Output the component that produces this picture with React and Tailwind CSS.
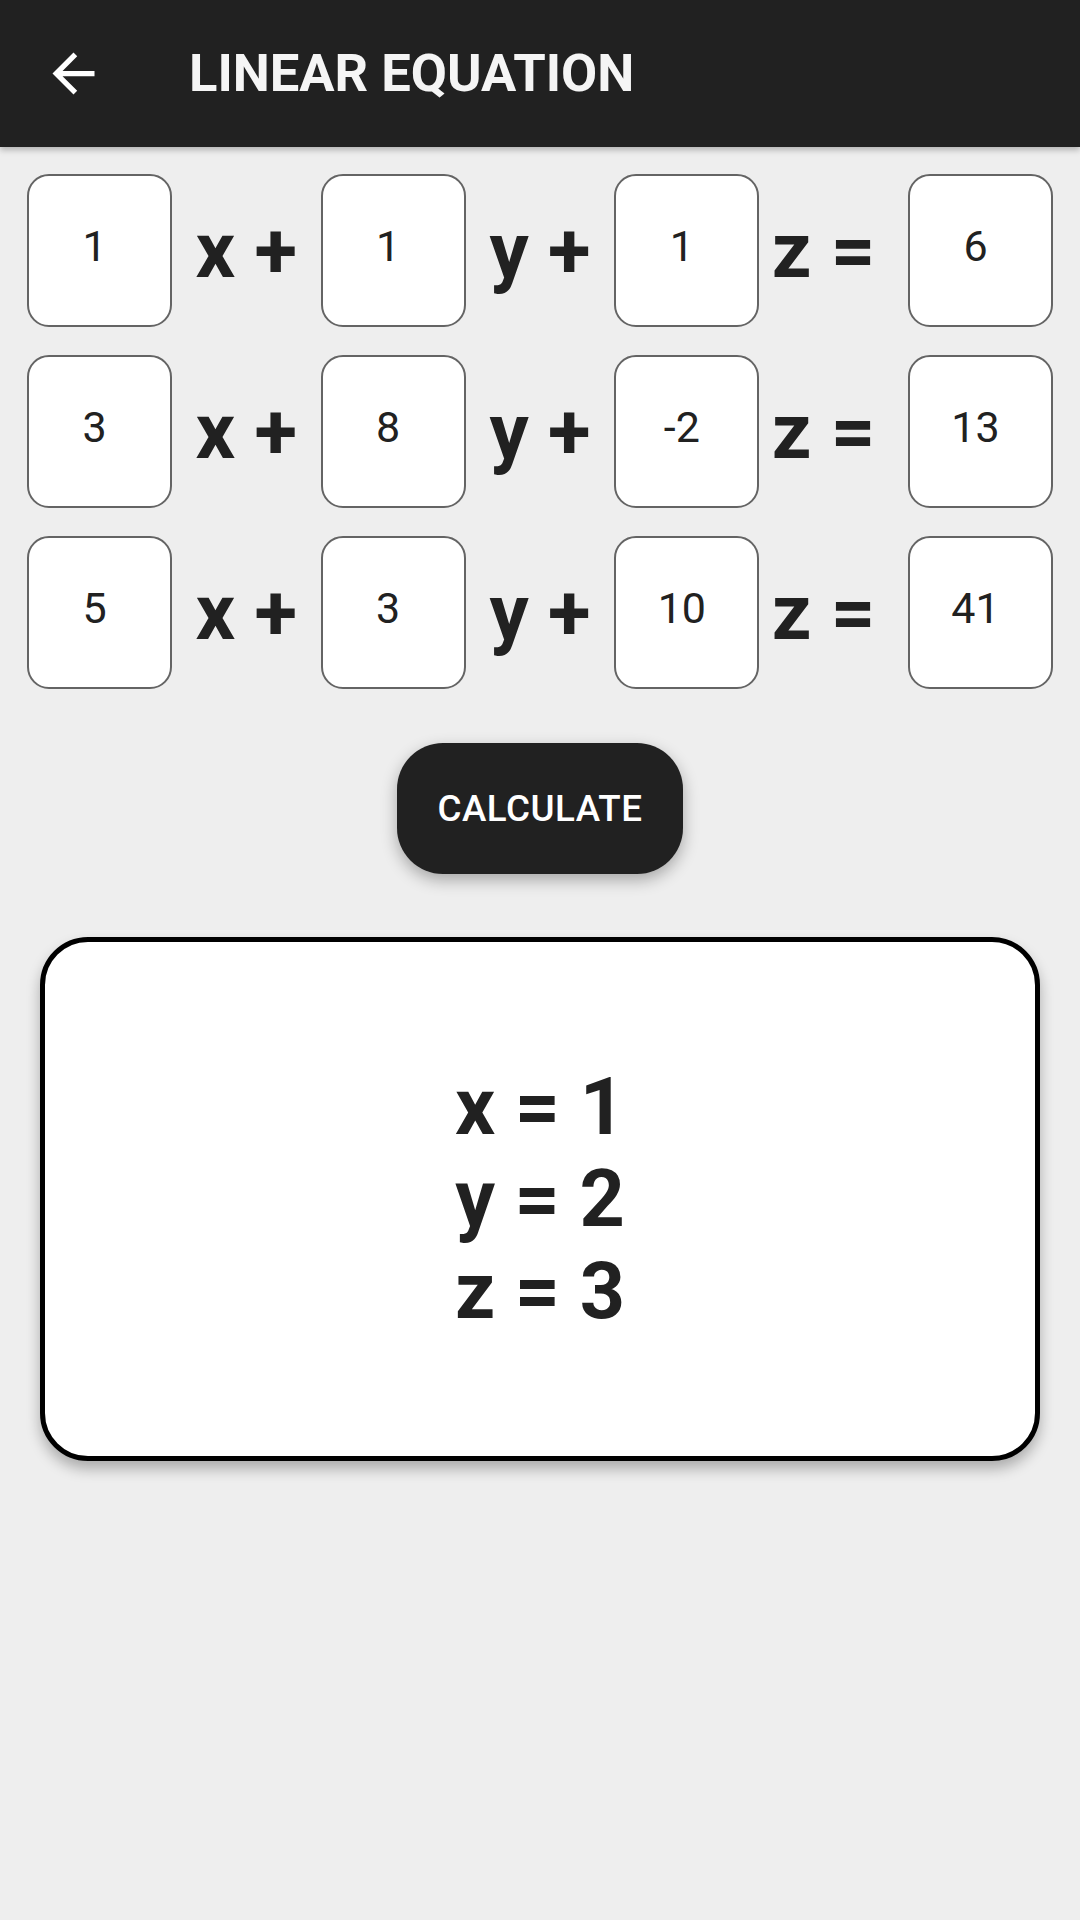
import React from "react";

const rows = [
  ["1", "1", "1", "6"],
  ["3", "8", "-2", "13"],
  ["5", "3", "10", "41"],
];

const NumberBox = ({ value }) => (
  <div className="w-[145px] h-[153px] shrink-0 bg-white border-2 border-[#646464] rounded-[22px] flex items-center justify-center pb-[8px] pr-[10px]">
    <span className="text-[43px] text-[#212121] leading-none">{value}</span>
  </div>
);

const Label = ({ text, extra = "" }) => (
  <div className="flex-1 min-w-0 flex items-center justify-center">
    <span className={`text-[78px] font-bold text-[#212121] leading-[1.172] whitespace-pre ${extra}`}>
      {text}
    </span>
  </div>
);

const App = () => {
  return (
    <div className="min-h-[1920px] bg-[#eeeeee] font-['Roboto',sans-serif]">
      {/* Toolbar */}
      <header className="h-[147px] bg-[#212121] flex items-center shadow-[0_3px_6px_rgba(0,0,0,0.25)] relative z-10">
        <button className="ml-[42px] w-[63px] h-[63px] flex items-center justify-center" aria-label="Back">
          <svg viewBox="0 0 24 24" className="w-[63px] h-[63px]" fill="#ffffff">
            <path d="M20 11H7.83l5.59-5.59L12 4l-8 8 8 8 1.41-1.41L7.83 13H20v-2z" />
          </svg>
        </button>
        <h1 className="ml-[84px] text-[52.5px] font-bold text-[#f5f5f5] leading-none">
          LINEAR EQUATION
        </h1>
      </header>

      {/* Equation rows */}
      <div className="flex flex-col gap-[28px] px-[27px] pt-[27px]">
        {rows.map((r, i) => (
          <div key={i} className="flex items-center">
            <NumberBox value={r[0]} />
            <Label text="x +" />
            <NumberBox value={r[1]} />
            <Label text="y +" />
            <NumberBox value={r[2]} />
            <Label text="z =" extra="pr-[20px]" />
            <NumberBox value={r[3]} />
          </div>
        ))}
      </div>

      {/* Calculate button */}
      <div className="flex justify-center mt-[54px]">
        <button className="w-[286px] h-[131px] bg-[#212121] rounded-[46px] text-white text-[36.75px] font-medium tracking-[0.5px] shadow-[0_6px_16px_rgba(0,0,0,0.3)]">
          CALCULATE
        </button>
      </div>

      {/* Result card */}
      <div className="mx-[40px] mt-[63px] h-[524px] bg-white border-[5px] border-black rounded-[48px] flex items-center justify-center shadow-[0_8px_14px_rgba(0,0,0,0.28)]">
        <div className="text-[79px] font-bold text-[#212121] leading-[92px] text-center">
          <div>x = 1</div>
          <div>y = 2</div>
          <div>z = 3</div>
        </div>
      </div>
    </div>
  );
};

export default App;
